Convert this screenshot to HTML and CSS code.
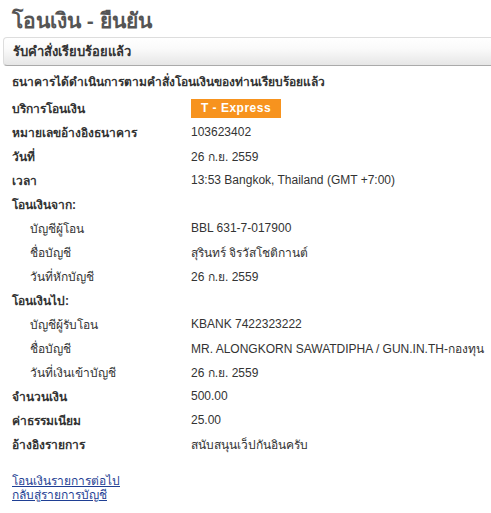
FILE: index.html
```html
<!DOCTYPE html>
<html lang="th">
<head>
    <meta charset="UTF-8">
    <title>โอนเงิน - ยืนยัน</title>
    <link rel="stylesheet" href="styles.css">
</head>
<body>

<h1 class="page-title">โอนเงิน - ยืนยัน</h1>

<div class="section-head">รับคำสั่งเรียบร้อยแล้ว</div>

<p class="notice">ธนาคารได้ดำเนินการตามคำสั่งโอนเงินของท่านเรียบร้อยแล้ว</p>

<table class="detail">
    <tr>
        <th>บริการโอนเงิน</th>
        <td><span class="badge">T - Express</span></td>
    </tr>
    <tr>
        <th>หมายเลขอ้างอิงธนาคาร</th>
        <td>103623402</td>
    </tr>
    <tr>
        <th>วันที่</th>
        <td>26 ก.ย. 2559</td>
    </tr>
    <tr>
        <th>เวลา</th>
        <td>13:53 Bangkok, Thailand (GMT +7:00)</td>
    </tr>
    <tr>
        <th colspan="2">โอนเงินจาก:</th>
    </tr>
    <tr class="sub">
        <th>บัญชีผู้โอน</th>
        <td>BBL 631-7-017900</td>
    </tr>
    <tr class="sub">
        <th>ชื่อบัญชี</th>
        <td>สุรินทร์ จิรวัสโชติกานต์</td>
    </tr>
    <tr class="sub">
        <th>วันที่หักบัญชี</th>
        <td>26 ก.ย. 2559</td>
    </tr>
    <tr>
        <th colspan="2">โอนเงินไป:</th>
    </tr>
    <tr class="sub">
        <th>บัญชีผู้รับโอน</th>
        <td>KBANK 7422323222</td>
    </tr>
    <tr class="sub">
        <th>ชื่อบัญชี</th>
        <td>MR. ALONGKORN SAWATDIPHA / GUN.IN.TH-กองทุน</td>
    </tr>
    <tr class="sub">
        <th>วันที่เงินเข้าบัญชี</th>
        <td>26 ก.ย. 2559</td>
    </tr>
    <tr>
        <th>จำนวนเงิน</th>
        <td>500.00</td>
    </tr>
    <tr>
        <th>ค่าธรรมเนียม</th>
        <td>25.00</td>
    </tr>
    <tr>
        <th>อ้างอิงรายการ</th>
        <td>สนับสนุนเว็ปกันอินครับ</td>
    </tr>
</table>

<div class="links">
    <a href="#">โอนเงินรายการต่อไป</a>
    <a href="#">กลับสู่รายการบัญชี</a>
</div>

</body>
</html>
```

FILE: styles.css
```css
body {
    font-family: "Liberation Sans", "Noto Sans", sans-serif;
    font-size: 12px;
    color: #333;
    background-color: #fff;
    margin: 0;
    padding: 0 0 0 3px;
}
.page-title {
    font-size: 21px;
    color: #555;
    margin: 0;
    padding: 8px 0 0 9px;
    height: 29px;
    line-height: 26px;
}
.section-head {
    margin-right: -4px;
    height: 27px;
    line-height: 27px;
    padding-left: 9px;
    font-weight: bold;
    font-size: 13px;
    border: 1px solid #ddd;
    border-bottom-color: #aaa;
    border-radius: 4px 0 0 4px;
    background: linear-gradient(#fff, #fafafa 40%, #e6e6e6);
}
.notice {
    font-weight: bold;
    margin: 0;
    padding: 8px 0 0 9px;
    line-height: 16px;
}
.detail {
    border-collapse: collapse;
    margin: 6px 0 0 9px;
}
.detail th,
.detail td {
    height: 24px;
    padding: 0;
    text-align: left;
    vertical-align: middle;
    white-space: nowrap;
}
.detail th {
    width: 179px;
}
.detail .sub th {
    font-weight: normal;
    padding-left: 18px;
    width: 161px;
}
.badge {
    display: inline-block;
    width: 90px;
    height: 19px;
    line-height: 19px;
    text-align: center;
    background-color: #f7931e;
    color: #fff;
    font-weight: bold;
    letter-spacing: 0.5px;
}
.links {
    margin: 18px 0 0 9px;
}
.links a {
    display: block;
    color: #1f3f94;
    line-height: 14px;
}
```
